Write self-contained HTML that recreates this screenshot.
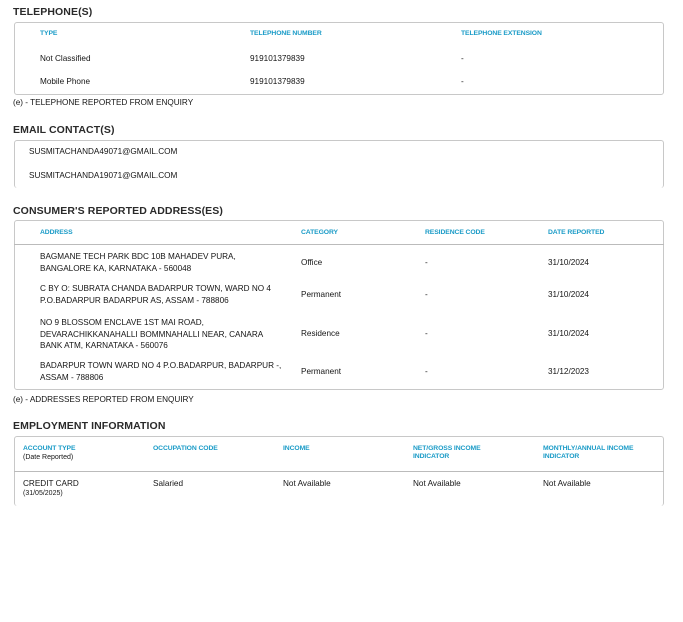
<!DOCTYPE html>
<html><head><meta charset="utf-8"><style>
*{margin:0;padding:0;box-sizing:border-box}
body{width:683px;height:622px;background:#fff;font-family:"Liberation Sans",sans-serif;color:#222;position:relative;overflow:hidden}
.a{position:absolute;white-space:nowrap}
.t{font-size:10.5px;font-weight:bold;letter-spacing:0.1px;color:#2a2a2a}
.h{font-size:6.8px;font-weight:bold;color:#1a9bc7;letter-spacing:-0.1px;line-height:8px}
.d{font-size:8.2px;color:#151515;line-height:11.5px}
.box{position:absolute;border:1px solid #c8c8c8;border-radius:3px}
.ln{position:absolute;height:1px;background:#bbb}
</style></head><body>
<div class="a t" style="left:13px;top:6px">TELEPHONE(S)</div>
<div class="box" style="left:14px;top:22px;width:650px;height:73px"></div>
<div class="a h" style="left:40px;top:30px">TYPE</div>
<div class="a h" style="left:250px;top:30px">TELEPHONE NUMBER</div>
<div class="a h" style="left:461px;top:30px">TELEPHONE EXTENSION</div>
<div class="a d" style="left:40px;top:53px">Not Classified</div>
<div class="a d" style="left:250px;top:53px">919101379839</div>
<div class="a d" style="left:461px;top:53px">-</div>
<div class="a d" style="left:40px;top:76px">Mobile Phone</div>
<div class="a d" style="left:250px;top:76px">919101379839</div>
<div class="a d" style="left:461px;top:76px">-</div>
<div class="a d" style="left:13px;top:97px">(e) - TELEPHONE REPORTED FROM ENQUIRY</div>

<div class="a t" style="left:13px;top:124px">EMAIL CONTACT(S)</div>
<div class="box" style="left:14px;top:140px;width:650px;height:48px;border-bottom:none"></div>
<div class="a d" style="left:29px;top:146px">SUSMITACHANDA49071@GMAIL.COM</div>
<div class="a d" style="left:29px;top:170px">SUSMITACHANDA19071@GMAIL.COM</div>

<div class="a t" style="left:13px;top:205px">CONSUMER'S REPORTED ADDRESS(ES)</div>
<div class="box" style="left:14px;top:220px;width:650px;height:170px"></div>
<div class="ln" style="left:14px;top:244px;width:650px"></div>
<div class="a h" style="left:40px;top:229px">ADDRESS</div>
<div class="a h" style="left:301px;top:229px">CATEGORY</div>
<div class="a h" style="left:425px;top:229px">RESIDENCE CODE</div>
<div class="a h" style="left:548px;top:229px">DATE REPORTED</div>

<div class="a d" style="left:40px;top:251px">BAGMANE TECH PARK BDC 10B MAHADEV PURA,<br>BANGALORE KA, KARNATAKA - 560048</div>
<div class="a d" style="left:301px;top:257px">Office</div><div class="a d" style="left:425px;top:257px">-</div><div class="a d" style="left:548px;top:257px">31/10/2024</div>

<div class="a d" style="left:40px;top:283px">C BY O: SUBRATA CHANDA BADARPUR TOWN, WARD NO 4<br>P.O.BADARPUR BADARPUR AS, ASSAM - 788806</div>
<div class="a d" style="left:301px;top:289px">Permanent</div><div class="a d" style="left:425px;top:289px">-</div><div class="a d" style="left:548px;top:289px">31/10/2024</div>

<div class="a d" style="left:40px;top:317px">NO 9 BLOSSOM ENCLAVE 1ST MAI ROAD,<br>DEVARACHIKKANAHALLI BOMMNAHALLI NEAR, CANARA<br>BANK ATM, KARNATAKA - 560076</div>
<div class="a d" style="left:301px;top:328px">Residence</div><div class="a d" style="left:425px;top:328px">-</div><div class="a d" style="left:548px;top:328px">31/10/2024</div>

<div class="a d" style="left:40px;top:360px">BADARPUR TOWN WARD NO 4 P.O.BADARPUR, BADARPUR -,<br>ASSAM - 788806</div>
<div class="a d" style="left:301px;top:366px">Permanent</div><div class="a d" style="left:425px;top:366px">-</div><div class="a d" style="left:548px;top:366px">31/12/2023</div>

<div class="a d" style="left:13px;top:394px">(e) - ADDRESSES REPORTED FROM ENQUIRY</div>

<div class="a t" style="left:13px;top:420px">EMPLOYMENT INFORMATION</div>
<div class="box" style="left:14px;top:436px;width:650px;height:70px;border-bottom:none"></div>
<div class="ln" style="left:14px;top:471px;width:650px"></div>
<div class="a h" style="left:23px;top:445px">ACCOUNT TYPE</div>
<div class="a d" style="left:23px;top:452px;font-size:7px">(Date Reported)</div>
<div class="a h" style="left:153px;top:445px">OCCUPATION CODE</div>
<div class="a h" style="left:283px;top:445px">INCOME</div>
<div class="a h" style="left:413px;top:445px">NET/GROSS INCOME<br>INDICATOR</div>
<div class="a h" style="left:543px;top:445px">MONTHLY/ANNUAL INCOME<br>INDICATOR</div>
<div class="a d" style="left:23px;top:478px">CREDIT CARD</div>
<div class="a d" style="left:23px;top:488px;font-size:7px">(31/05/2025)</div>
<div class="a d" style="left:153px;top:478px">Salaried</div>
<div class="a d" style="left:283px;top:478px">Not Available</div>
<div class="a d" style="left:413px;top:478px">Not Available</div>
<div class="a d" style="left:543px;top:478px">Not Available</div>
</body></html>
